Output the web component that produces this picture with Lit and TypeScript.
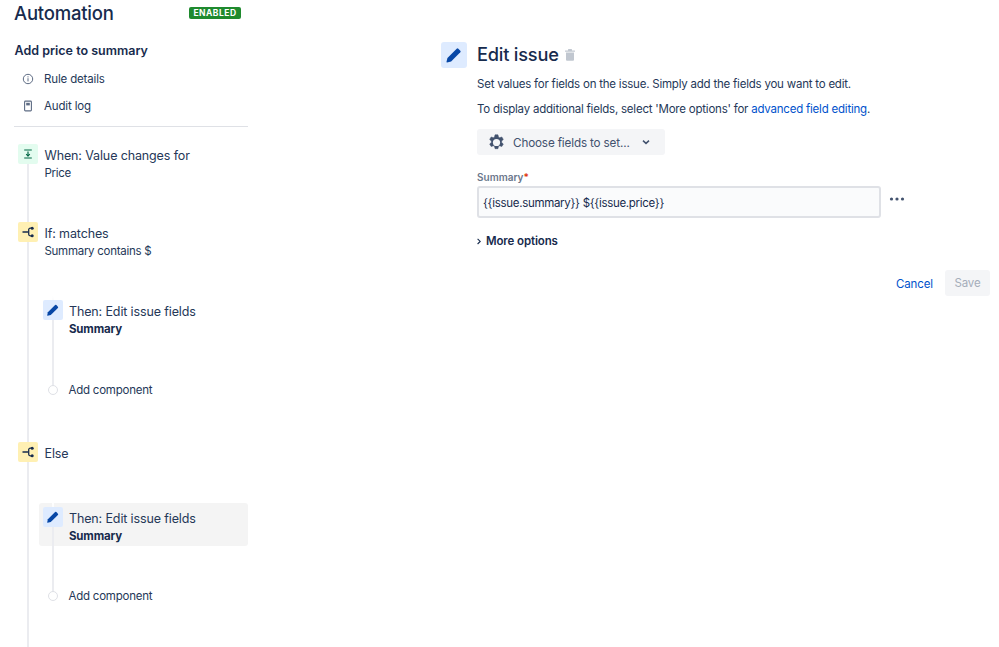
import { html, css, LitElement, svg } from 'lit';
import { customElement } from 'lit/decorators.js';

const pencil = svg`<path d="M2.2 18.2a.5.5 0 0 1-.5-.6l1-4.4L13 3a1.3 1.3 0 0 1 1.8 0L17 5.2a1.3 1.3 0 0 1 0 1.8L6.8 17.2z" fill="#0747a6"/>`;
const branch = svg`<g fill="none" stroke="#172b4d" stroke-width="1.3"><path d="M1.5 7h5.5M11 3.2H9.2a1.5 1.5 0 0 0-1.5 1.5v4.6a1.5 1.5 0 0 0 1.5 1.5H11"/></g><circle cx="11.2" cy="3.2" r="1.5" fill="#172b4d"/><circle cx="11.2" cy="10.8" r="1.5" fill="#172b4d"/>`;

@customElement('app-root')
export class AppRoot extends LitElement {
  static styles = css`
    :host {
      display: block;
      height: 647px;
      overflow: hidden;
      background: #fff;
      color: #172b4d;
      font-family: Inter, "Liberation Sans", sans-serif;
    }
    .page {
      display: flex;
      height: 647px;
    }
    .left {
      width: 234px;
      margin-left: 14px;
      flex: none;
    }
    .head {
      display: flex;
      justify-content: space-between;
      align-items: flex-start;
      height: 29px;
      margin-top: 1px;
      padding-right: 7px;
    }
    h1 {
      margin: 0;
      font-size: 18.5px;
      line-height: 24px;
      font-weight: 500;
      letter-spacing: -0.2px;
    }
    .badge {
      margin-top: 6px;
      width: 52px;
      height: 12px;
      border-radius: 2px;
      background: #1f8a2e;
      color: #fff;
      font-size: 8.5px;
      line-height: 12px;
      font-weight: 700;
      text-align: center;
      letter-spacing: 0.5px;
    }
    h2 {
      margin: 13px 0 0 0.5px;
      font-size: 12.5px;
      line-height: 16px;
      font-weight: 600;
    }
    .nav {
      display: flex;
      align-items: center;
      gap: 10px;
      height: 27px;
      padding-left: 8px;
      font-size: 11.5px;
      letter-spacing: -0.15px;
      color: #253858;
    }
    .nav svg {
      flex: none;
    }
    .first {
      margin-top: 6px;
    }
    hr {
      margin: 7px 0 0;
      border: none;
      height: 1px;
      background: #dfe1e6;
    }
    .tree {
      position: relative;
      height: 520px;
      padding-top: 17px;
    }
    .tree::before {
      content: "";
      position: absolute;
      left: 13px;
      top: 36px;
      bottom: 0;
      width: 2px;
      background: #ebecf0;
    }
    .step {
      position: relative;
      display: flex;
      gap: 6.5px;
      padding-left: 4px;
    }
    .ico {
      position: relative;
      z-index: 2;
      flex: none;
      width: 20px;
      height: 20px;
      border-radius: 2px;
      display: flex;
      align-items: center;
      justify-content: center;
    }
    .green { background: #e3fcef; }
    .yellow { background: #fff0b3; }
    .blue { background: #deebff; }
    .txt {
      position: relative;
      z-index: 2;
      padding-top: 4px;
      font-size: 12.5px;
      line-height: 16px;
      letter-spacing: -0.13px;
      color: #253858;
    }
    .sub {
      margin-top: 1px;
      font-size: 11.5px;
      line-height: 16px;
      letter-spacing: -0.28px;
    }
    .bold {
      font-weight: 700;
      letter-spacing: -0.18px;
      color: #172b4d;
    }
    .s2 { margin-top: 41px; }
    .s3 { margin-top: 44px; }
    .branch {
      position: relative;
      margin-left: 25px;
    }
    .branch::before {
      content: "";
      position: absolute;
      z-index: 1;
      left: 13px;
      top: 0;
      bottom: 9px;
      width: 2px;
      background: linear-gradient(#fff, #ebecf0 24px);
    }
    .inner {
      position: relative;
      display: flex;
      gap: 6px;
      padding: 4px 0 2px 4px;
      border-radius: 3px;
    }
    .inner.first-then { margin-top: 37px; }
    .inner.active {
      margin-top: 41px;
      background: #f4f4f4;
    }
    .add {
      position: relative;
      z-index: 2;
      display: flex;
      align-items: center;
      gap: 11px;
      padding-left: 8.5px;
      font-size: 11.5px;
      line-height: 16px;
      letter-spacing: -0.23px;
      color: #253858;
    }
    .add.a1 { margin-top: 43px; }
    .add.a2 { margin-top: 42px; }
    .dot {
      width: 8px;
      height: 8px;
      border: 1px solid #dfe1e6;
      border-radius: 50%;
      background: #fff;
      flex: none;
    }
    .right {
      margin-left: 193px;
      flex: none;
      width: 549px;
      padding-top: 42px;
    }
    .title {
      display: flex;
      align-items: center;
      gap: 10px;
      height: 26px;
    }
    .big {
      flex: none;
      width: 26px;
      height: 26px;
      border-radius: 3px;
      background: #deebff;
      display: flex;
      align-items: center;
      justify-content: center;
    }
    .title h3 {
      margin: 0;
      padding-bottom: 2px;
      font-size: 18.2px;
      line-height: 24px;
      font-weight: 500;
      letter-spacing: -0.2px;
    }
    .title svg.bin {
      margin-left: -4px;
    }
    .body {
      padding-left: 36px;
    }
    p {
      margin: 0;
      font-size: 11.5px;
      line-height: 16px;
      letter-spacing: -0.22px;
      color: #253858;
    }
    .p1 { margin-top: 8px; }
    .p2 { margin-top: 9px; }
    a { color: #0052cc; text-decoration: none; }
    .choose {
      margin-top: 12px;
      width: 188px;
      height: 26px;
      box-sizing: border-box;
      display: flex;
      align-items: center;
      padding-left: 11px;
      border-radius: 3px;
      background: #f4f5f7;
      font-size: 11.7px;
      letter-spacing: -0.15px;
      color: #42526e;
    }
    .choose span {
      margin: 0 11px 0 8px;
      padding-top: 1px;
    }
    .label {
      margin-top: 15px;
      font-size: 10px;
      line-height: 14px;
      font-weight: 600;
      color: #6b778c;
    }
    .label i {
      color: #de350b;
      font-style: normal;
    }
    .field {
      display: flex;
      margin-top: 2px;
      gap: 8px;
    }
    .field svg {
      margin-top: 5px;
    }
    .input {
      width: 404px;
      height: 32px;
      box-sizing: border-box;
      border: 2px solid #dfe1e6;
      border-radius: 3px;
      background: #fafbfc;
      padding-left: 4px;
      font-size: 11.5px;
      line-height: 30px;
      letter-spacing: -0.3px;
      color: #172b4d;
    }
    .more {
      display: flex;
      align-items: center;
      gap: 5px;
      margin-top: 15px;
      font-size: 11.5px;
      line-height: 16px;
      font-weight: 600;
      letter-spacing: -0.12px;
      color: #172b4d;
    }
    .actions {
      display: flex;
      justify-content: flex-end;
      align-items: center;
      gap: 12px;
      margin-top: 21px;
      font-size: 11.5px;
      letter-spacing: -0.1px;
    }
    .actions a {
      padding-top: 1px;
    }
    .save {
      width: 45px;
      height: 26px;
      line-height: 27px;
      text-align: center;
      border-radius: 3px;
      background: #f4f5f7;
      color: #a5adba;
    }
  `;

  render() {
    return html`
      <div class="page">
        <div class="left">
          <div class="head"><h1>Automation</h1><div class="badge">ENABLED</div></div>
          <h2>Add price to summary</h2>
          <div class="nav first">
            <svg width="12" height="12" viewBox="0 0 12 12"><circle cx="6" cy="6" r="4.7" fill="none" stroke="#5e6c84" stroke-width="1"/><rect x="5.5" y="5.2" width="1" height="3.2" fill="#5e6c84"/><rect x="5.5" y="3.3" width="1" height="1.1" fill="#5e6c84"/></svg>
            Rule details
          </div>
          <div class="nav">
            <svg width="12" height="12" viewBox="0 0 12 12"><rect x="2.6" y="1.1" width="6.8" height="9.8" rx=".8" fill="none" stroke="#5e6c84" stroke-width="1.1"/><rect x="4.2" y="2.8" width="3.6" height="2.6" fill="#5e6c84"/></svg>
            Audit log
          </div>
          <hr />
          <div class="tree">
            <div class="step">
              <div class="ico green">
                <svg width="14" height="14" viewBox="0 0 14 14" fill="none" stroke="#006644" stroke-width="1.2"><path d="M3.2 3h7.6M3.2 11h7.6M7 4.6v4.6"/><path d="M5.2 7.2 7 9l1.8-1.8"/></svg>
              </div>
              <div class="txt">When: Value changes for<div class="sub">Price</div></div>
            </div>
            <div class="step s2">
              <div class="ico yellow"><svg width="14" height="14" viewBox="0 0 14 14">${branch}</svg></div>
              <div class="txt">If: matches<div class="sub">Summary contains $</div></div>
            </div>
            <div class="branch">
              <div class="inner first-then">
                <div class="ico blue"><svg width="14" height="14" viewBox="0 0 20 20">${pencil}</svg></div>
                <div class="txt">Then: Edit issue fields<div class="sub bold">Summary</div></div>
              </div>
              <div class="add a1"><div class="dot"></div>Add component</div>
            </div>
            <div class="step s3">
              <div class="ico yellow"><svg width="14" height="14" viewBox="0 0 14 14">${branch}</svg></div>
              <div class="txt">Else</div>
            </div>
            <div class="branch">
              <div class="inner active">
                <div class="ico blue"><svg width="14" height="14" viewBox="0 0 20 20">${pencil}</svg></div>
                <div class="txt">Then: Edit issue fields<div class="sub bold">Summary</div></div>
              </div>
              <div class="add a2"><div class="dot"></div>Add component</div>
            </div>
          </div>
        </div>
        <div class="right">
          <div class="title">
            <div class="big"><svg width="18" height="18" viewBox="0 0 20 20">${pencil}</svg></div>
            <h3>Edit issue</h3>
            <svg class="bin" width="10" height="12" viewBox="0 0 10 12" fill="#c1c7d0"><rect x="0" y="1.4" width="10" height="1.4" rx=".4"/><rect x="3" y="0" width="4" height="2" rx=".5"/><path d="M1 3.4h8v7.4a1 1 0 0 1-1 1H2a1 1 0 0 1-1-1z"/></svg>
          </div>
          <div class="body">
            <p class="p1">Set values for fields on the issue. Simply add the fields you want to edit.</p>
            <p class="p2">To display additional fields, select 'More options' for <a>advanced field editing</a>.</p>
            <div class="choose">
              <svg width="17" height="17" viewBox="0 0 16 16"><path d="M6.6.8h2.8l.4 2 1.2.7 2-.7 1.4 2.4-1.6 1.4v1.4l1.6 1.4-1.4 2.4-2-.7-1.2.7-.4 2H6.6l-.4-2-1.2-.7-2 .7-1.4-2.4 1.6-1.4V6.6L1.6 5.2 3 2.8l2 .7 1.2-.7z" fill="#42526e" stroke="#42526e" stroke-width=".5" stroke-linejoin="round"/><circle cx="8" cy="8" r="3.4" fill="#f4f5f7"/></svg>
              <span>Choose fields to set...</span>
              <svg width="10" height="10" viewBox="0 0 10 10" fill="none" stroke="#42526e" stroke-width="1.5"><path d="M2 3.6 5 6.4l3-2.8"/></svg>
            </div>
            <div class="label">Summary<i>*</i></div>
            <div class="field">
              <div class="input">{{issue.summary}} $\{{issue.price}}</div>
              <svg width="16" height="16" viewBox="0 0 16 16" fill="#42526e"><circle cx="2.5" cy="8" r="1.6"/><circle cx="8" cy="8" r="1.6"/><circle cx="13.5" cy="8" r="1.6"/></svg>
            </div>
            <div class="more">
              <svg width="4" height="7" viewBox="0 0 4 7" fill="none" stroke="#172b4d" stroke-width="1.1"><path d="M.6.8 3.2 3.4.6 6"/></svg>
              More options
            </div>
            <div class="actions"><a>Cancel</a><div class="save">Save</div></div>
          </div>
        </div>
      </div>
    `;
  }
}
